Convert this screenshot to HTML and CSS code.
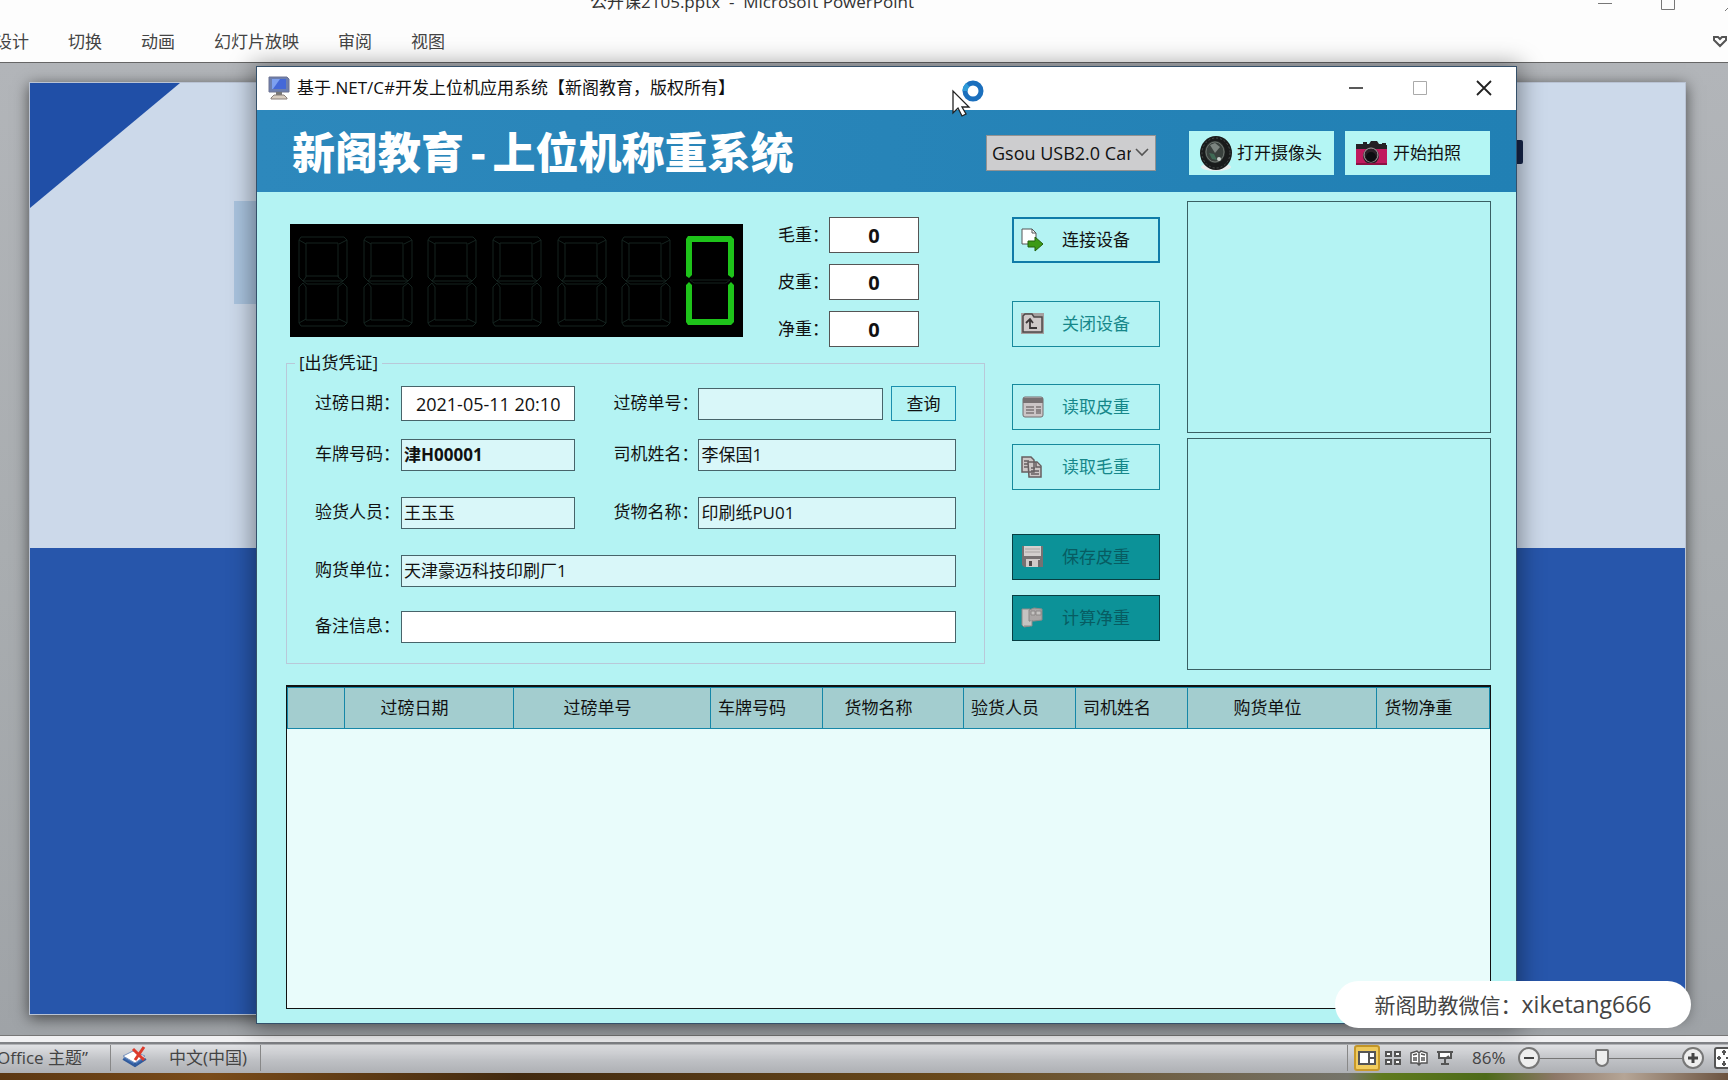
FILE: index.html
```html
<!DOCTYPE html>
<html lang="zh-CN">
<head>
<meta charset="utf-8">
<title>基于.NET/C#开发上位机应用系统</title>
<link rel="stylesheet" href="styles.css">
</head>
<body>
<div class="desktop">
  <header class="ribbon">
    <div class="ribbon-title">公开课2105.pptx&nbsp; -&nbsp; Microsoft PowerPoint</div>
    <svg class="ribbon-controls" width="140" height="12" viewBox="0 0 140 12" fill="none" stroke="#777" aria-hidden="true"><path d="M10 3.500h14M73.500 -4v13.500h13V-4M137 11l10-10"/></svg>
    <nav class="tabs">
      <a href="#">设计</a><a href="#">切换</a><a href="#">动画</a><a href="#">幻灯片放映</a><a href="#">审阅</a><a href="#">视图</a>
      <svg class="heart" width="14" height="12" viewBox="0 0 14 12" fill="none" stroke="#555" stroke-width="2"><path d="M1 3V1h4l2 2 2-2h4v3L7 10 1 4z"/></svg>
    </nav>
  </header>

  <main class="workspace">
    <div class="slide">
      <div class="slide-corner"></div>
      <div class="slide-block"></div>
      <div class="slide-mark"></div>
    </div>
  </main>

  <footer class="status">
    <div class="status-theme">“Office 主题”</div>
    <svg class="spell" width="28" height="24" viewBox="0 0 28 24"><path d="M2 12l10-5 13 6-11 8z" fill="#3f6fb5"/><path d="M2 10l10-5 12 5-10 7z" fill="#fff" stroke="#7993bd"/><path d="M2 13l12 7 11-7M14 17v3" fill="none" stroke="#315a9b" stroke-width="2"/><path d="M12 3l11 11M23 1l-9 13" stroke="#dd3b2c" stroke-width="3" fill="none"/></svg>
    <div class="status-lang">中文(中国)</div>
    <div class="status-right">
      <button class="view active" aria-label="普通视图"><svg width="18" height="16" viewBox="0 0 18 16" fill="#fff" stroke="#555" stroke-width="2"><path d="M1 2h16v12H1zM11 2v12M12 8h4"/></svg></button>
      <button class="view" aria-label="幻灯片浏览"><svg width="18" height="16" viewBox="0 0 18 16" fill="#fff" stroke="#555" stroke-width="2"><path d="M2 2h5v4H2zM11 2h5v4h-5zM2 10h5v4H2zM11 10h5v4h-5z"/></svg></button>
      <button class="view" aria-label="阅读视图"><svg width="18" height="16" viewBox="0 0 18 16" fill="#fff" stroke="#555" stroke-width="1.500"><path d="M1 3l6-2 2 2 2-2 6 2v10h-6l-2 2-2-2H1zM9 3v11M3 5l4-1M3 8h4M3 10h4M11 4l4 1M11 8h4M11 10h4"/></svg></button>
      <button class="view" aria-label="幻灯片放映"><svg width="18" height="16" viewBox="0 0 18 16" fill="#fff" stroke="#555" stroke-width="2"><path d="M1 2h16M3 2v6h12V2M9 8v6M5 14h8M9 9l4-3"/></svg></button>
      <span class="percent">86%</span>
      <button class="round" aria-label="缩小"><svg width="12" height="12" viewBox="0 0 12 12" stroke="#444" stroke-width="2"><path d="M1 6h10"/></svg></button>
      <input class="zoom" type="range" min="0" max="100" value="43" aria-label="缩放">
      <button class="round" aria-label="放大"><svg width="12" height="12" viewBox="0 0 12 12" stroke="#444" stroke-width="3"><path d="M1 6h10M6 1v10"/></svg></button>
      <svg class="fit" width="14" height="22" viewBox="0 0 14 22" fill="#fff" stroke="#555" stroke-width="2"><path d="M16 1H3q-2 0-2 2v16q0 2 2 2h13" /><path d="M3 11h4M5 9v4M10 3v5M8 5h4M10 14v5M8 17h4M12 11h2"/></svg>
    </div>
  </footer>
  <div class="wallpaper"></div>
</div>

<section class="window">
  <div class="titlebar">
    <svg width="24" height="24" viewBox="0 0 24 24"><path d="M2 1h18l2 2v13H2z" fill="#6d7fae" stroke="#6f7592"/><path d="M5 3h14v10H5z" fill="#4468d8"/><path d="M5 3h8l-7 10H5z" fill="#7da0f0"/><path d="M9 16h6v3H9z" fill="#777"/><path d="M4 22l3-3h10l3 3v1H4z" fill="#d7ccbf" stroke="#887f7a"/></svg>
    <h1>基于.NET/C#开发上位机应用系统【新阁教育，版权所有】</h1>
    <button class="caption" aria-label="最小化"><svg width="16" height="16" viewBox="0 0 16 16" stroke="#222" stroke-width="1.500"><path d="M1 8h14"/></svg></button>
    <button class="caption" aria-label="最大化" disabled><svg width="16" height="16" viewBox="0 0 16 16" fill="none" stroke="#aaa"><path d="M1.500 1.500h13v13h-13z"/></svg></button>
    <button class="caption" aria-label="关闭"><svg width="16" height="16" viewBox="0 0 16 16" stroke="#222" stroke-width="1.800"><path d="M1 1l14 14M15 1L1 15"/></svg></button>
  </div>

  <div class="banner">
    <h2>新阁教育<span class="dash">-</span>上位机称重系统</h2>
    <div class="combo">
      <select aria-label="摄像头"><option>Gsou USB2.0 Camera</option></select>
      <svg width="14" height="9" viewBox="0 0 14 9" fill="none" stroke="#555" stroke-width="1.600"><path d="M1 1l6 6 6-6"/></svg>
    </div>
    <button class="photo"><svg width="36" height="36" viewBox="0 0 36 36"><ellipse cx="18" cy="32" rx="15" ry="4" fill="#e9eeee"/><ellipse cx="18" cy="18" rx="16" ry="17" fill="#191b1b"/><ellipse cx="18" cy="18" rx="14" ry="15" fill="none" stroke="#4a4f4d" stroke-dasharray="2 2"/><ellipse cx="17" cy="17" rx="10" ry="11" fill="#39413d"/><ellipse cx="17" cy="17" rx="9" ry="10" fill="none" stroke="#6c736e"/><path d="M12 10l5-2 5 4-5 6z" fill="#7c8580"/><path d="M11 18l5 1 3 6-5-1z" fill="#3f6a55"/><circle cx="21" cy="24" r="2" fill="#c5cdc8"/></svg>打开摄像头</button>
    <button class="photo"><svg width="36" height="36" viewBox="0 0 36 36"><path d="M2 11h31v19H2z" fill="#c01a5e"/><path d="M2 9h7V7h4v2h2l2-3h6l2 3h3V8h4v2h1v4H2z" fill="#252025"/><circle cx="17" cy="21" r="8" fill="#2a1f27"/><circle cx="17" cy="20" r="7" fill="none" stroke="#a9a3a4"/><circle cx="17" cy="22" r="5" fill="#0d0d11"/><path d="M2 29h31" stroke="#8d1144" stroke-width="2"/></svg>开始拍照</button>
  </div>

  <div class="client">
    <div class="upper">
      <div class="left">
        <div class="readout">
          <svg class="led" width="453" height="113" viewBox="0 0 453 113" role="img" aria-label="0">
            <defs>
              <g id="ghost" fill="none" stroke="#14231f">
                <path d="M2 0h43l3 3v37l-4 4-5-4V6H7v34l-3 4-4-4V3zM4 44h40l-4 3H8z"/>
                <path d="M7 39h33M2 89h43l3-3V50l-4-4-5 4v33H7V50l-3-4-4 4v36zM0 3l7 4M48 3l-8 4M0 86l7-4M48 86l-8-4"/>
              </g>
            </defs>
            <rect width="453" height="113" fill="#000"/>
            <use href="#ghost" x="9" y="13"/><use href="#ghost" x="74" y="13"/><use href="#ghost" x="138" y="13"/><use href="#ghost" x="203" y="13"/><use href="#ghost" x="268" y="13"/><use href="#ghost" x="332" y="13"/>
            <g transform="translate(396 12)"><path d="M4 44h40l-4 3H8z" fill="none" stroke="#14231f"/><path d="M2 0h43l3 3v37l-2 2-4-3V6H6v33l-3 3-3-2V3zM2 89h43l3-3V49l-3-3-3 3v34H6V49l-3-3-3 3v37z" fill="#1ec31a"/></g>
          </svg>
          <div class="weights">
            <label for="gross">毛重：</label><input id="gross" value="0">
            <label for="tare">皮重：</label><input id="tare" value="0">
            <label for="net">净重：</label><input id="net" value="0">
          </div>
        </div>
        <fieldset>
          <legend>[出货凭证]</legend>
          <div class="form">
            <label for="date" class="first">过磅日期：</label><input id="date" class="tall" value="2021-05-11 20:10">
            <label for="ticket" class="first">过磅单号：</label><div class="query"><input id="ticket" class="tint"><button>查询</button></div>
            <label for="plate">车牌号码：</label><input id="plate" class="tint strong" value="津H00001">
            <label for="driver">司机姓名：</label><input id="driver" class="tint" value="李保国1">
            <label for="checker">验货人员：</label><input id="checker" class="tint" value="王玉玉">
            <label for="goods">货物名称：</label><input id="goods" class="tint" value="印刷纸PU01">
            <label for="buyer">购货单位：</label><input id="buyer" class="tint wide" value="天津豪迈科技印刷厂1">
            <label for="note">备注信息：</label><input id="note" class="wide">
          </div>
        </fieldset>
      </div>

      <div class="actions">
        <div class="group connect">
          <button class="action primary"><svg width="24" height="24" viewBox="0 0 24 24"><path d="M1 1h10l4 4v11H1z" fill="#fff" stroke="#555"/><path d="M11 1v4h4" fill="none" stroke="#555"/><path d="M7 13h7V9l8 7-8 7v-4H7z" fill="#3d9a16" stroke="#23600d"/></svg>连接设备</button>
          <button class="action" disabled><svg width="24" height="24" viewBox="0 0 24 24"><path d="M0 1h23v21H0z" fill="#a5a09f"/><path d="M2 4l2-2h7l2 3h8v15H2z" fill="#cfc9c8" stroke="#4e4848" stroke-width="1.500"/><path d="M5 11l4-4 3 4M9 8v8h7" fill="none" stroke="#3b3636" stroke-width="1.800"/></svg>关闭设备</button>
        </div>
        <div class="group read">
          <button class="action" disabled><svg width="24" height="24" viewBox="0 0 24 24"><rect x="2" y="2" width="20" height="20" rx="2" fill="#cbc5c6" stroke="#736c6e"/><path d="M2 3h20v5H2z" fill="#777172"/><path d="M5 12h8M5 15h8M5 18h8M15 12h5M15 18h5" stroke="#7d7677" stroke-width="1.500"/><path d="M15 14h5v3h-5z" fill="#8c8586"/></svg>读取皮重</button>
          <button class="action" disabled><svg width="24" height="24" viewBox="0 0 24 24" fill="#cdc7c6" stroke="#665f60" stroke-width="1.500"><path d="M1 2h9l3 3v12H1zM7 7h9l4 4v11H8z"/><path d="M3 6h5M3 9h4M3 12h4M15 7v5h5M10 13h4M10 16h8M10 19h8"/></svg>读取毛重</button>
        </div>
        <div class="group save">
          <button class="action dark" disabled><svg width="24" height="24" viewBox="0 0 24 24"><path d="M1 1h21v21H3l-2-2z" fill="#777172"/><path d="M3 1h17v10H3z" fill="#d4cfce"/><path d="M4 4h15M4 7h15" stroke="#aaa4a3"/><path d="M5 14h14v8H5z" fill="#d0cac9"/><path d="M8 16h3v5H8z" fill="#504a4a"/><path d="M17 15h2v7h-2z" fill="#716b6b"/></svg>保存皮重</button>
          <button class="action dark" disabled><svg width="24" height="24" viewBox="0 0 24 24" fill="#c5c3c1" stroke="#8c8988"><path d="M1 3h8v17l-6 1-2-2z"/><path d="M8 4l5-2 8 1v11l-8 1H8z" fill="#aaa6a5"/><path d="M10 5h4v4h-4zM15 5h5v4h-5zM3 20h8v-6"/></svg>计算净重</button>
        </div>
      </div>

      <div class="previews"><div class="preview"></div><div class="preview"></div></div>
    </div>

    <div class="grid-box">
      <table>
        <colgroup><col class="c-mark"><col class="c-date"><col class="c-ticket"><col class="c-plate"><col class="c-goods"><col class="c-person"><col class="c-person"><col class="c-buyer"><col></colgroup>
        <thead><tr><th></th><th>过磅日期</th><th>过磅单号</th><th>车牌号码</th><th>货物名称</th><th>验货人员</th><th>司机姓名</th><th>购货单位</th><th>货物净重</th></tr></thead>
      </table>
    </div>
  </div>
</section>

<svg class="cursor" width="34" height="38" viewBox="0 0 34 38"><circle cx="21" cy="11" r="8" fill="#fff" stroke="#1b6fbd" stroke-width="5"/><path d="M13 11a8 8 0 0 1 3-6" fill="none" stroke="#2f9bd8" stroke-width="5"/><path d="M1 11v22l5-5 4 8 4-2-4-7h7z" fill="#fff" stroke="#222" stroke-width="1.300"/></svg>
<div class="contact">新阁助教微信：<span>xiketang666</span></div>
</body>
</html>
```
FILE: styles.css
```css
* { box-sizing: border-box; }

body {
  margin: 0;
  overflow: hidden;
  font: 17px/22px "Open Sans", "Noto Sans CJK SC", sans-serif;
  color: #111;
}

button, input, select { font: inherit; color: inherit; margin: 0; padding: 0; border-radius: 0; }
button { background: none; border: 0; }
svg { flex: none; }

/* PowerPoint behind the window */
.desktop { display: flex; flex-direction: column; height: 100vh; background: #a9adb1; }

.ribbon { position: relative; display: flex; flex-direction: column; height: 63px; background: #fdfdfd; border-bottom: 1px solid #666; overflow: hidden; }
.ribbon-title { height: 30px; margin: -10px 0 11px 590px; font-size: 17px; line-height: 24px; color: #333; white-space: nowrap; }
.ribbon-controls { position: absolute; top: 0; right: 0; }
.tabs { display: flex; align-items: center; gap: 39px; margin-left: -5px; padding-right: 1px; }
.tabs a { color: #444; text-decoration: none; white-space: nowrap; }
.heart { margin-left: auto; }

.workspace { flex: 1; display: flex; padding: 19px 42px 20px 29px; background: linear-gradient(#b2b5b9, #a9adb0 50%, #9fa3a7); }
.slide { position: relative; flex: 1; background: linear-gradient(#ccd9ea 0 50%, #2756ab 50%); border: 1px solid #b9c3d4; box-shadow: 0 3px 14px rgba(0, 0, 0, .6); }
.slide-corner { width: 150px; height: 125px; background: #204fa7; clip-path: polygon(0 0, 100% 0, 0 100%); }
.slide-block { position: absolute; left: 204px; top: 118px; width: 100px; height: 103px; background: #a9c3de; }
.slide-mark { position: absolute; right: 162px; top: 57px; width: 12px; height: 24px; border-radius: 2px; background: #17264a; }

.status { display: flex; align-items: center; height: 38px; padding-top: 7px; color: #444; border-top: 1px solid #777; background: linear-gradient(#f1f1f3 0 6px, #808286 6px 8px, #e0e1e4 9px, #bfc1c5 24px, #aeb0b4); }
.status-theme { display: flex; justify-content: flex-end; width: 111px; height: 26px; line-height: 26px; padding-right: 22px; overflow: hidden; white-space: nowrap; border-right: 1px solid #888; }
.spell { margin-left: 10px; }
.status-lang { height: 26px; line-height: 26px; margin-left: 20px; padding-right: 13px; border-right: 1px solid #888; }
.status-right { display: flex; align-items: center; height: 26px; margin-left: auto; border-left: 1px solid #888; padding-left: 6px; }
.view { display: flex; align-items: center; justify-content: center; width: 26px; height: 26px; }
.active { background: #f2cd5e; border: 2px solid #c99a2a; border-radius: 3px; }
.percent { width: 52px; padding-left: 14px; }
.round { display: flex; align-items: center; justify-content: center; width: 22px; height: 22px; border: 2px solid #777; border-radius: 50%; background: #eee; }
.percent + .round { margin-left: 8px; }
.zoom { appearance: none; width: 142px; height: 22px; background: linear-gradient(#777, #777) center / 100% 1px no-repeat; }
.zoom::-webkit-slider-thumb { appearance: none; width: 14px; height: 18px; background: #eee; border: 2px solid #777; border-radius: 2px 2px 7px 7px; }
.fit { margin-left: 10px; }
.wallpaper { height: 7px; background: linear-gradient(90deg, #5b3712, #7a4c1a 12%, #422a10 30%, #6a4a1c 55%, #75746a 78%, #5f7a1e 80%, #4d6a1a 86%, #8d7868 90%, #b5a596 94%, #6b5340); }

/* Weighing application */
.window { position: absolute; left: 256px; right: 211px; top: 66px; bottom: 56px; display: flex; flex-direction: column; border: 1px solid #34506a; background: #b4f3f3; box-shadow: 0 2px 22px 4px rgba(0, 0, 0, .38); }
.titlebar { display: flex; align-items: center; height: 43px; padding: 0 0 2px 10px; background: #fff; }
.titlebar h1 { flex: 1; margin: 0 0 0 6px; font-size: 17px; font-weight: 400; line-height: 22px; white-space: nowrap; }
.caption { display: flex; align-items: center; justify-content: center; width: 64px; height: 41px; }

.banner { display: flex; align-items: center; height: 82px; padding: 3px 25px 0 35px; background: linear-gradient(90deg, #2d88bc, #2180b4); }
.banner h2 { flex: 1; margin: 0; padding-bottom: 6px; font: 900 43px/60px "Noto Sans CJK SC", sans-serif; color: #fff; white-space: nowrap; }
.dash { margin: 0 6px; }
.combo { display: flex; align-items: center; width: 170px; height: 36px; margin-right: 32px; padding-right: 6px; background: #cdcdcf; border: 1px solid #929292; }
.combo select { appearance: none; flex: 1; min-width: 0; height: 34px; margin-right: 4px; padding-left: 5px; border: 0; background: none; font-size: 18px; text-overflow: clip; }
.photo { display: flex; align-items: center; gap: 3px; width: 147px; height: 46px; padding-left: 9px; border: 1px solid #2180b4; background: #b4f6f4; white-space: nowrap; }
.photo + .photo { margin-left: 9px; }

.client { flex: 1; display: flex; flex-direction: column; gap: 15px; padding: 9px 25px 14px 29px; }
.upper { display: grid; grid-template-columns: 1fr 148px 304px; column-gap: 27px; }
.left, .actions { padding-top: 16px; }

.readout { display: flex; align-items: center; padding-left: 4px; gap: 35px; }
.led { margin-bottom: 3px; }
.weights { display: grid; grid-template-columns: 51px 90px; row-gap: 11px; align-items: center; }
.weights input { width: 100%; height: 36px; font-size: 20px; font-weight: 700; text-align: center; background: #fff; border: 1px solid #555; }

fieldset { margin: 5px 0 0; padding: 12px 28px 20px; border: 1px solid #b9c8d8; min-width: 0; }
legend { margin-left: -20px; padding: 0 4px; }
.form { display: grid; grid-template-columns: 86px minmax(0, 174fr) 123px minmax(0, 257fr); grid-template-rows: 53px 58px 58px 56px 32px; align-items: start; }
.form label { line-height: 30px; white-space: nowrap; }
.form .first { line-height: 34px; }
.form label:nth-of-type(even):not([for="note"]) { padding-left: 38px; }
.form input { width: 100%; height: 32px; padding: 0 2px 4px; background: #fff; border: 1px solid #47646a; }
.form .tint { background: #d9f7f9; }
.form .strong { font-weight: 700; }
.form .tall { height: 35px; padding: 0; font-size: 18px; text-align: center; }
.wide { grid-column: span 3; }
.query { display: flex; align-items: center; gap: 8px; }
.query input { flex: 1; min-width: 0; }
.query button { width: 65px; height: 35px; border: 1px solid #1a8fae; }

.group { display: flex; flex-direction: column; gap: 14px; }
.connect { gap: 38px; margin-bottom: 37px; }
.read { margin-bottom: 44px; }
.save { gap: 15px; }
.action { display: flex; align-items: center; gap: 17px; width: 100%; height: 46px; padding-left: 8px; border: 1px solid #16899c; color: #16878a; white-space: nowrap; }
.primary { border: 2px solid #0f7ba8; padding-left: 7px; color: #111; }
.dark { background: #0c9298; border-color: #073e42; color: #075c62; }

.previews { display: grid; gap: 5px; align-content: start; }
.preview { height: 232px; border: 1px solid #3a5f63; }

.grid-box { flex: 1; border: 1px solid #111; border-top-width: 2px; background: #e9fcfb; }
table { width: 100%; table-layout: fixed; border-collapse: collapse; }
th { height: 41px; padding: 0 29px 0 0; font-weight: 400; white-space: nowrap; background: #a3cdcf; border: 1px solid #1687a8; }
.c-mark { width: 57px; }
.c-date { width: 169px; }
.c-ticket { width: 197px; }
.c-plate, .c-person { width: 112px; }
.c-goods { width: 141px; }
.c-buyer { width: 189px; }

.cursor { position: absolute; left: 952px; top: 80px; }
.contact { position: absolute; right: 37px; bottom: 52px; width: 356px; height: 47px; border-radius: 24px; background: #fff; text-align: center; font: 21px/47px "Noto Sans CJK SC", sans-serif; color: #444; white-space: nowrap; }
.contact span { font-family: "Open Sans", sans-serif; font-size: 23px; }
```
